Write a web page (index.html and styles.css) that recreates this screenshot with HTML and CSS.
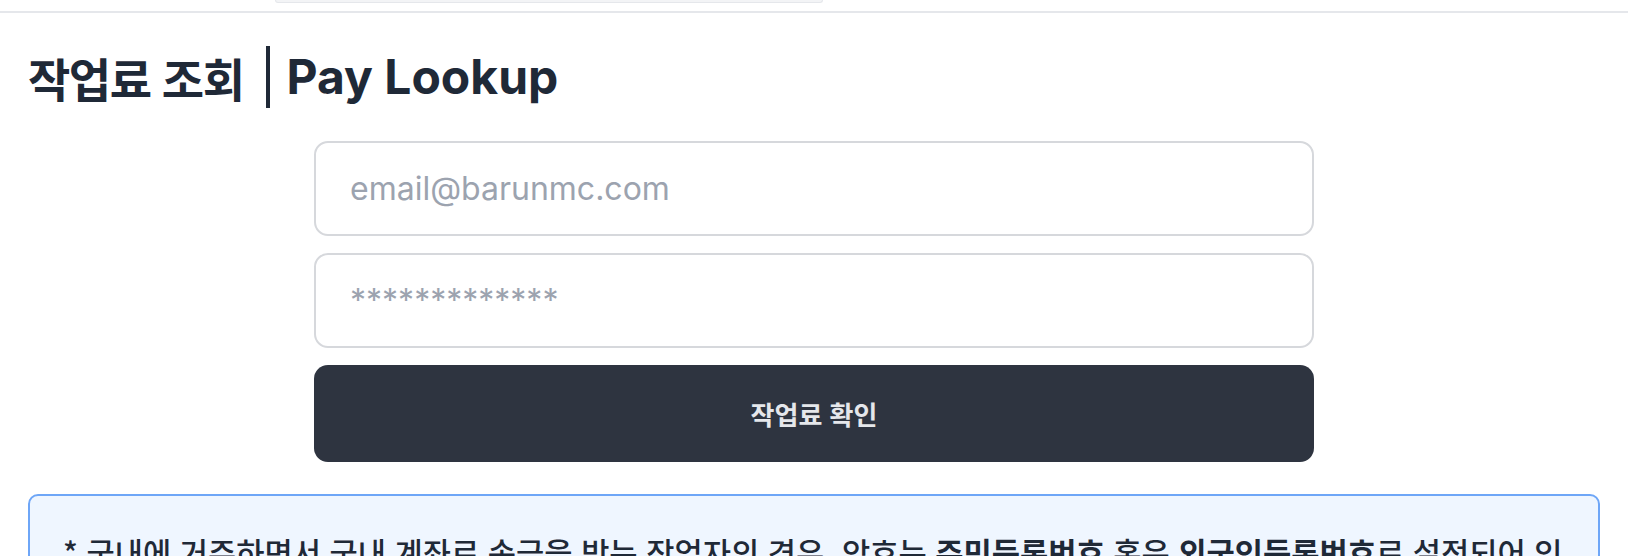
FILE: index.html
```html
<!DOCTYPE html>
<html lang="ko">
<head>
<meta charset="utf-8">
<title>작업료 조회 | Pay Lookup</title>
<link rel="stylesheet" href="styles.css">
</head>
<body>
<header class="topbar">
  <div class="search-stub"></div>
</header>
<main class="page">
  <h1 class="title"><span class="title-ko">작업료 조회</span> <span class="title-bar"></span> Pay Lookup</h1>
  <form class="lookup-form">
    <input class="field" type="email" placeholder="email@barunmc.com">
    <input class="field" type="password" placeholder="*************">
    <button class="submit" type="button">작업료 확인</button>
  </form>
  <section class="notice">
    <p class="notice-text">* 국내에 거주하면서 국내 계좌로 송금을 받는 작업자의 경우, 암호는 <strong>주민등록번호</strong> 혹은 <strong>외국인등록번호</strong>로 설정되어 있습니다.</p>
  </section>
</main>
</body>
</html>
```
FILE: styles.css
```css
* { box-sizing: border-box; }
html, body { margin: 0; background: #ffffff; }
body {
  font-family: Inter, "Noto Sans CJK KR", sans-serif;
  color: #1f2937;
  overflow: hidden;
}
.topbar {
  height: 13px;
  border-bottom: 2px solid #e5e7eb;
  padding-left: 275px;
}
.search-stub {
  width: 548px;
  height: 3px;
  background: #f3f4f6;
  border: 1px solid #e5e7eb;
  border-top: none;
  border-radius: 0 0 8px 8px;
}
.page {
  padding: 0 28px;
}
.title {
  margin: 33px 0 0;
  font-size: 48px;
  line-height: 58px;
  font-weight: 700;
  color: #1f2937;
  display: flex;
  align-items: center;
  gap: 12px;
  white-space: nowrap;
}
.title-ko {
  font-family: "Noto Sans CJK KR", sans-serif;
  font-size: 46px;
  letter-spacing: -1.5px;
}
.title-bar {
  display: inline-block;
  width: 4px;
  height: 62px;
  background: #1f2937;
  margin: 0 4px 0 11px;
}
.lookup-form {
  width: 1000px;
  margin: 33px auto 0;
  display: flex;
  flex-direction: column;
  gap: 17px;
}
.field {
  height: 95px;
  border: 2px solid #d6d8dc;
  border-radius: 14px;
  padding: 0 34px;
  font-family: Inter, sans-serif;
  font-size: 32px;
  color: #1f2937;
  background: #fff;
  outline: none;
}
.field::placeholder { color: #9ca3af; }
.submit {
  height: 97px;
  border: none;
  border-radius: 14px;
  background: #2e3440;
  color: #e5e7eb;
  font-family: "Noto Sans CJK KR", sans-serif;
  font-size: 26px;
  font-weight: 700;
  cursor: pointer;
}
.notice {
  margin-top: 32px;
  border: 2px solid #6ea6f7;
  border-radius: 10px;
  background: #eff6ff;
  padding: 33px 24px 36px 33px;
}
.notice-text {
  margin: 0;
  font-family: "Noto Sans CJK KR", sans-serif;
  font-size: 30.7px;
  font-weight: 500;
  line-height: 46px;
  color: #1f2937;
}
.notice-text strong { font-weight: 700; }
```
